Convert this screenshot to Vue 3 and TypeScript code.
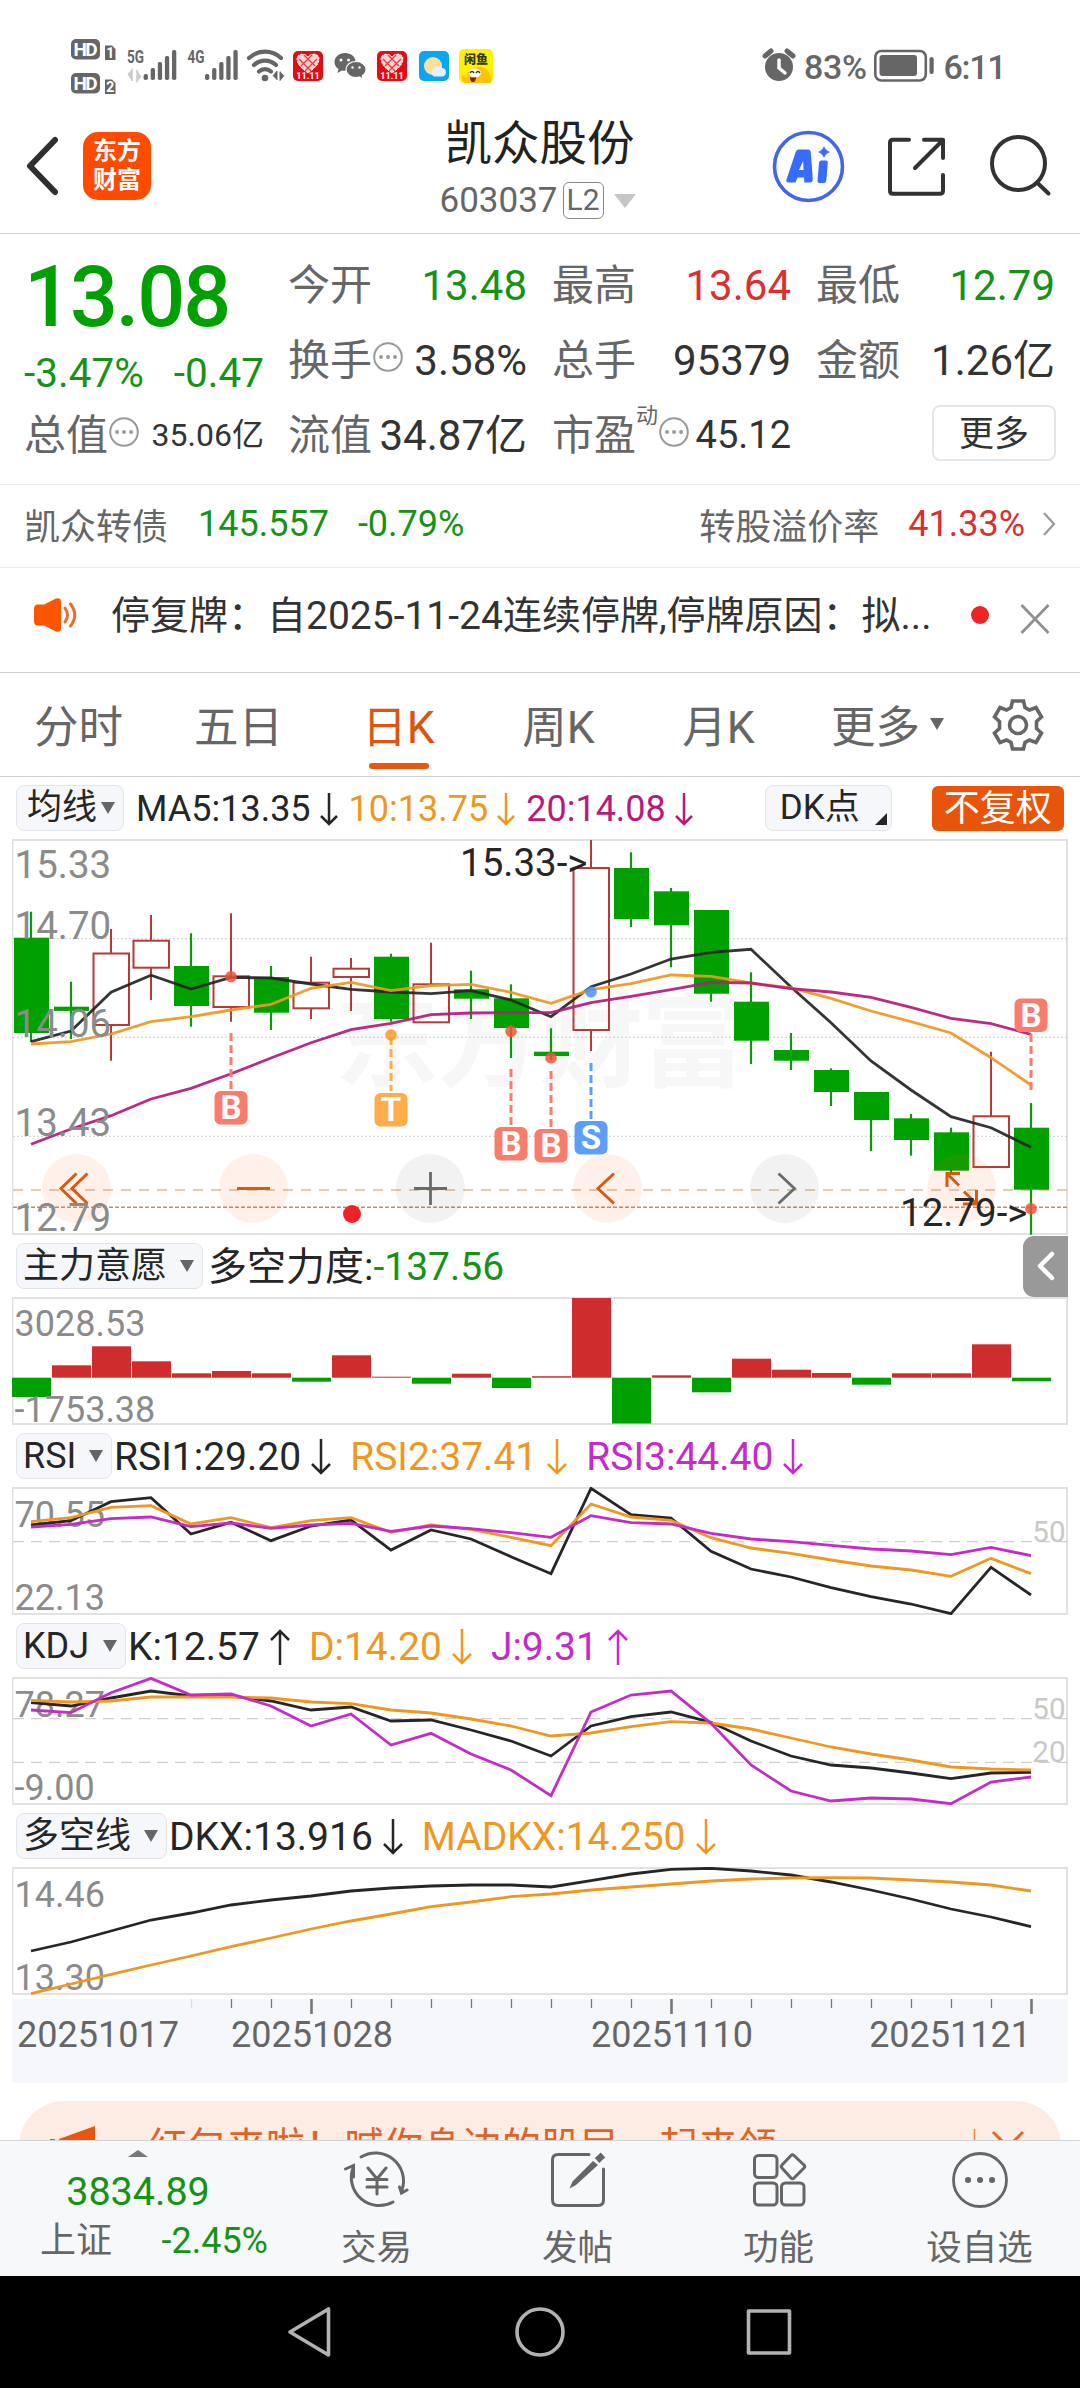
<script setup lang="ts">
type Candle = [up: boolean, top: number, bottom: number, high: number, low: number]
interface Marker { i: number; label: string; box: number; from: number; to: number; dot: number; color: string; dotColor: string }
interface Series { color: string; ys: number[] }
interface Value { text: string; color: string; dir: 'up' | 'down' | '' ; prefix?: string }
interface Panel {
  name: string
  pill: number
  top: number
  values: Value[]
  max: string
  min: string
  maxY: number
  minY: number
  guides: { y: number; label: string }[]
  series: Series[]
  bars?: number[]
}

const INK = '#262626'
const ORANGE = '#ee981f'
const PURPLE = '#c42bc9'
const MAGENTA = '#b81a7b'

const cx = (i: number) => 31 + 40 * i
const line = (ys: number[]) => ys.map((y, i) => `${cx(i)},${y}`).join(' ')

const candles: Candle[] = [
  [false, 937.7, 1033, 911.7, 1042], [false, 1006.7, 1010.9, 981.7, 1039],
  [true, 953.5, 1025, 929, 1060.7], [true, 940.7, 967.7, 915, 1000],
  [false, 966, 1006, 933.3, 1026.7], [true, 976.3, 1007, 913.3, 1021.7],
  [false, 977, 1012.7, 966, 1030], [true, 982.7, 1008.3, 956.7, 1019],
  [true, 968.7, 977, 958, 1011], [false, 956.7, 1019, 953.7, 1021.7],
  [true, 984.3, 1022.3, 942.7, 1022.3], [false, 989.3, 998.7, 970.7, 1019],
  [false, 998.3, 1028, 984.3, 1058], [false, 1051.7, 1056, 1028.3, 1060],
  [true, 868, 1030, 840, 1051], [false, 868, 919, 852.3, 927],
  [false, 891.3, 925.3, 888, 967.3], [false, 910, 993.7, 910, 1001.7],
  [false, 1001.7, 1040.7, 972.3, 1064], [false, 1050, 1060.7, 1033, 1070],
  [false, 1070, 1092, 1068.3, 1106], [false, 1092, 1120, 1092, 1151],
  [false, 1118.3, 1140, 1114, 1155.7], [false, 1132.3, 1170.7, 1127.7, 1173],
  [true, 1116.3, 1167, 1051.7, 1167], [false, 1127.7, 1189.7, 1103, 1234.7],
]
const averages: Series[] = [
  { color: INK, ys: [1041.7, 1031, 992.3, 975.3, 989, 977.3, 978, 984, 989.3, 992, 993.7, 990.7, 1000, 1016.7, 986.7, 974, 959, 952.3, 949.3, 987, 1022.7, 1061, 1090, 1116.7, 1127.7, 1147.3] },
  { color: ORANGE, ys: [1044, 1041.7, 1034, 1021.7, 1016.7, 1010, 1004.3, 988.3, 982.3, 990.7, 985.7, 984.3, 992.3, 1003.3, 989.7, 983.7, 975, 976.3, 983, 988, 998.3, 1011, 1021.7, 1033, 1057.7, 1085] },
  { color: MAGENTA, ys: [1144.3, 1129, 1115.7, 1099, 1088.3, 1073.7, 1058, 1042.7, 1029.7, 1023.3, 1014.7, 1013, 1012.7, 1012.7, 1002.7, 996.3, 989.7, 982.3, 983, 988.7, 992, 997.3, 1007.3, 1018.3, 1023.7, 1034.3] },
]
const RED_TAG = '#fa7c6b'
const markers: Marker[] = [
  { i: 5, label: 'B', box: 1091, from: 1033, to: 1089, dot: 976.7, color: RED_TAG, dotColor: '#f0533c' },
  { i: 9, label: 'T', box: 1093, from: 1037, to: 1091, dot: 1035, color: '#ffad4a', dotColor: '#ff9a26' },
  { i: 12, label: 'B', box: 1127, from: 1069, to: 1125, dot: 1031.3, color: RED_TAG, dotColor: '#f0533c' },
  { i: 13, label: 'B', box: 1129, from: 1071, to: 1127, dot: 1058, color: RED_TAG, dotColor: '#f0533c' },
  { i: 14, label: 'S', box: 1121, from: 1063, to: 1119, dot: 992, color: '#5c9ffb', dotColor: '#4a92fb' },
  { i: 25, label: 'B', box: 998.5, from: 1034, to: 1090, dot: 1208.7, color: RED_TAG, dotColor: '#f0533c' },
]
const priceLabels: [string, number][] = [['15.33', 877.5], ['14.70', 938.7], ['14.06', 1037.3], ['13.43', 1135.7], ['12.79', 1230.7]]
const rings = [
  { x: 76.4, warm: true }, { x: 253.4, warm: true }, { x: 430.4, warm: false },
  { x: 607.5, warm: true }, { x: 784.5, warm: false }, { x: 961.5, warm: true },
]
const maValues: Value[] = [
  { text: 'MA5:13.35', color: INK, dir: 'down' },
  { text: '10:13.75', color: ORANGE, dir: 'down' },
  { text: '20:14.08', color: MAGENTA, dir: 'down' },
]

const ZERO = 1377.7
const scale = (base: number, ps: number[]) => ps.map(p => base + p / 3)
const panels: Panel[] = [
  {
    name: '主力意愿', pill: 187, top: 1297, max: '3028.53', min: '-1753.38', maxY: 1336, minY: 1421.7, guides: [], series: [],
    values: [{ prefix: '多空力度:', text: '-137.56', color: '#169316', dir: '' }],
    bars: [1397, 1365.3, 1346.3, 1361.3, 1373.3, 1371, 1373.3, 1381.7, 1355.3, 1376.7, 1383.7, 1373.7, 1388, 1376.2, 1298, 1423.5, 1375.3, 1392.3, 1358.7, 1369.7, 1373, 1384.7, 1373.3, 1373.3, 1344.3, 1381.3],
  },
  {
    name: 'RSI', pill: 96, top: 1487, max: '70.55', min: '22.13', maxY: 1526.7, minY: 1609.7,
    guides: [{ y: 1541.7, label: '50' }],
    values: [{ text: 'RSI1:29.20', color: INK, dir: 'down' }, { text: 'RSI2:37.41', color: ORANGE, dir: 'down' }, { text: 'RSI3:44.40', color: PURPLE, dir: 'down' }],
    series: [
      { color: INK, ys: scale(1230, [885, 872, 815, 803, 912, 877, 932, 888, 870, 960, 900, 927, 980, 1031, 775, 854, 864, 964, 1017, 1041, 1073, 1100, 1122, 1151, 1012, 1095]) },
      { color: ORANGE, ys: scale(1230, [875, 863, 832, 827, 882, 863, 893, 872, 863, 907, 885, 898, 922, 947, 822, 861, 871, 923, 954, 970, 990, 1008, 1020, 1039, 985, 1031]) },
      { color: PURPLE, ys: scale(1230, [891, 883, 866, 861, 890, 879, 895, 885, 880, 904, 888, 896, 908, 922, 857, 878, 882, 910, 927, 935, 946, 957, 963, 974, 952, 977]) },
    ],
  },
  {
    name: 'KDJ', pill: 110, top: 1677, max: '78.27', min: '-9.00', maxY: 1717, minY: 1800,
    guides: [{ y: 1718.7, label: '50' }, { y: 1762.3, label: '20' }],
    values: [{ text: 'K:12.57', color: INK, dir: 'up' }, { text: 'D:14.20', color: ORANGE, dir: 'down' }, { text: 'J:9.31', color: PURPLE, dir: 'up' }],
    series: [
      { color: INK, ys: scale(1640, [188, 198, 174, 153, 168, 168, 183, 210, 201, 243, 240, 270, 303, 348, 258, 230, 216, 247, 303, 348, 375, 384, 399, 416, 399, 397]) },
      { color: ORANGE, ys: scale(1640, [181, 186, 183, 171, 171, 171, 174, 186, 191, 210, 219, 237, 258, 288, 279, 260, 245, 249, 267, 294, 321, 342, 360, 381, 387, 390]) },
      { color: PURPLE, ys: scale(1640, [210, 218, 158, 115, 165, 162, 198, 258, 222, 315, 280, 342, 390, 467, 216, 165, 153, 250, 375, 453, 483, 474, 477, 491, 426, 411]) },
    ],
  },
  {
    name: '多空线', pill: 151, top: 1867, max: '14.46', min: '13.30', maxY: 1907, minY: 1989.7, guides: [],
    values: [{ text: 'DKX:13.916', color: INK, dir: 'down' }, { text: 'MADKX:14.250', color: ORANGE, dir: 'down' }],
    series: [
      { color: INK, ys: scale(1640, [933, 906, 873, 840, 819, 795, 780, 768, 753, 744, 738, 735, 735, 741, 722, 702, 688, 685, 693, 705, 726, 750, 777, 807, 831, 860]) },
      { color: ORANGE, ys: scale(1640, [1061, 1032, 1003, 975, 948, 920, 894, 867, 843, 822, 800, 786, 770, 762, 750, 741, 732, 723, 717, 714, 713, 714, 720, 726, 735, 753]) },
    ],
  },
]
const ticks = Array.from({ length: 22 }, (_, k) => k + 4)
const isMajor = (i: number) => i === 7 || i === 16 || i === 25

const tabs = ['分时', '五日', '日K', '周K', '月K', '更多']
const signals = [{ x: 127, net: '5G', bars: 143.6 }, { x: 187.5, net: '4G', bars: 205 }]
</script>

<template>
  <div class="screen">
    <div class="status">
      <svg width="1080" height="100" viewBox="0 0 1080 100">
        <g v-for="(y, k) in [39, 73]" :key="y">
          <rect x="71" :y="y" width="29" height="20.5" rx="5" fill="#666" />
          <text x="73.500" :y="y + 16.5" class="hd" textLength="24">HD</text>
          <path :d="`M105 ${y + 6.5}h7l3.500 3.500v11h-10.500z`" fill="#666" />
          <text x="110.200" :y="y + 19" class="sim" text-anchor="middle">{{ k + 1 }}</text>
        </g>
        <g v-for="s in signals" :key="s.net">
          <text :x="s.x" y="63" class="net" textLength="17" lengthAdjust="spacingAndGlyphs">{{ s.net }}</text>
          <rect v-for="b in 5" :key="b" :x="s.bars + (b - 1) * 7.100" :y="80 - b * 6" width="4.300" :height="b * 6" rx="1.800" fill="#666" />
        </g>
        <path d="M128 75l4-5v11M137 70v11l4-5" fill="#ccc" stroke="#ccc" stroke-width="1.500" />
        <g fill="none" stroke="#666" stroke-width="4.200" stroke-linecap="round">
          <path d="M249 58a23.500 23.500 0 0 1 32 0M254 65a16 16 0 0 1 22 0M259 71.500a9 9 0 0 1 12 0" />
        </g>
        <circle cx="265" cy="78" r="3.300" fill="#666" />
        <path d="M273 76l4-5v9M280 71.500v9l4-5" fill="#666" stroke="#666" />
        <g v-for="x in [293, 377]" :key="x">
          <rect :x="x" y="51" width="30" height="30" rx="5" fill="#df0d16" />
          <path :transform="`translate(${x + 15} 63)`" d="M0 10C-7 5-11 1-11-4-11-9-4-11 0-6 4-11 11-9 11-4 11 1 7 5 0 10z" fill="#fbd3d1" stroke="#fff" stroke-dasharray="2 1.500" />
          <path :transform="`translate(${x + 15} 63)`" d="M-9-4L3 8M-4-8L7 3M9-4L-3 8M4-8L-7 3" stroke="#e53a40" stroke-width="1.300" />
          <text :x="x + 15" y="79" class="sale" text-anchor="middle">11.11</text>
        </g>
        <g fill="#666">
          <path d="M345 53c-6 0-10.500 4-10.500 9 0 3 1.500 5.500 4 7l-1 4 4.500-2.500c1 .3 2 .3 3 .3 6 0 10.500-4 10.500-9s-4.500-8.800-10.500-8.800z" />
          <path d="M356 61.500c-5.500 0-10 3.500-10 8s4.500 8 10 8c1.200 0 2.300-.2 3.300-.5l4 2.200-1-3.500c2.300-1.500 3.700-3.700 3.700-6.200 0-4.500-4.500-8-10-8z" stroke="#fff" stroke-width="1.200" />
        </g>
        <g fill="#fff"><circle cx="341" cy="60" r="1.500" /><circle cx="348.500" cy="60" r="1.500" /><circle cx="352.500" cy="67.500" r="1.200" /><circle cx="359.500" cy="67.500" r="1.200" /></g>
        <rect x="419" y="51" width="30" height="30" rx="5" fill="#0aa6f2" />
        <circle cx="433" cy="66" r="9" fill="#ffdf9c" />
        <path d="M434 76.500a4 4 0 0 1 0-7.500 5 5 0 0 1 8.500-1 4.300 4.300 0 0 1-.5 8.500z" fill="#e8effc" />
        <rect x="459" y="49" width="34" height="34" rx="5" fill="#fff200" />
        <text x="476" y="64" class="fish" text-anchor="middle">闲鱼</text>
        <path d="M465 83c-4-3-4-6-2-8l3 2c2-8 9-11 16-10 7 2 10 8 9 16z" fill="#ffc400" />
        <ellipse cx="475" cy="73" rx="6" ry="4.500" fill="#fff" />
        <path d="M470 73q2-3 4 0M476 73q2-3 4 0" stroke="#333" stroke-width="1.400" fill="none" />
        <path d="M470 77q3 1 6 0 0 5-3 5t-3-5z" fill="#7a2010" />
        <circle cx="779" cy="67" r="14" fill="#666" />
        <path d="M765 56l6-5M793 56l-6-5" stroke="#666" stroke-width="5" stroke-linecap="round" />
        <path d="M779 60v8l6 5" fill="none" stroke="#fff" stroke-width="3.500" stroke-linecap="round" />
        <text x="804" y="78.500" class="stat" textLength="63">83%</text>
        <rect x="875.300" y="51" width="50.500" height="29.500" rx="6" fill="none" stroke="#666" stroke-width="2.600" />
        <rect x="879.500" y="55" width="37.500" height="21" rx="3" fill="#666" />
        <rect x="929.500" y="57" width="4.200" height="17" rx="2" fill="#666" />
        <text x="943.500" y="78.500" class="stat" textLength="63">6:11</text>
      </svg>
    </div>

    <header class="header">
      <svg class="back" width="34" height="60" viewBox="0 0 34 60"><path d="M29 4L4 30 29 56" fill="none" stroke="#2f2f2f" stroke-width="6" stroke-linecap="round" stroke-linejoin="round" /></svg>
      <div class="logo"><span>东方</span><span>财富</span></div>
      <div class="title">
        <h1>凯众股份</h1>
        <div class="code"><span>603037</span><i>L2</i><b class="drop"></b></div>
      </div>
      <svg class="actions" width="286" height="80" viewBox="770 126 286 80">
        <circle cx="808.500" cy="166.500" r="34" fill="#fff" stroke="#4166e8" stroke-width="3.600" />
        <path fill-rule="evenodd" d="M798.500 149.500h9.500q2.500 0 2.800 3l2 27q0 3-3 3h-5.500l-.3-5h-6.500l-2 5h-7q-3 0-2-3l9-27q1-3 3-3zM799 170h4.500l-.3-9z" fill="#366cff" />
        <path d="M821 160.500h5q2 0 1.800 2l-1.500 18q-.3 2.500-2.500 2.500h-4.500q-2 0-1.800-2.500l1.500-17.500q.3-2.500 2-2.500zM824 146q1.500 4.500 6 6-4.500 1.500-6 6-1.500-4.500-6-6 4.500-1.500 6-6z" fill="#366cff" />
        <g fill="none" stroke="#333" stroke-width="4" stroke-linecap="round" stroke-linejoin="round">
          <path d="M909 139.700h-16q-3 0-3 3v48q0 3 3 3h47q3 0 3-3V175M924 139.700h19V158M942 141L915 168" />
          <circle cx="1018.500" cy="163.500" r="26.500" />
          <path d="M1037.500 183L1048.500 193.500" />
        </g>
      </svg>
    </header>

    <section class="stats">
      <div class="lead">
        <div class="price">13.08</div>
        <div class="change"><span>-3.47%</span><span>-0.47</span></div>
        <div class="cell"><label>总值</label><svg class="info" viewBox="0 0 30 30"><circle cx="15" cy="15" r="13.800" /><path d="M8 15h.1M15 15h.1M22 15h.1" /></svg><em class="small">35.06亿</em></div>
      </div>
      <div class="grid">
        <div class="cell"><label>今开</label><em class="down">13.48</em></div>
        <div class="cell"><label>最高</label><em class="up">13.64</em></div>
        <div class="cell"><label>最低</label><em class="down">12.79</em></div>
        <div class="cell"><label>换手</label><svg class="info" viewBox="0 0 30 30"><circle cx="15" cy="15" r="13.800" /><path d="M8 15h.1M15 15h.1M22 15h.1" /></svg><em>3.58%</em></div>
        <div class="cell"><label>总手</label><em>95379</em></div>
        <div class="cell"><label>金额</label><em>1.26亿</em></div>
        <div class="cell"><label>流值</label><em>34.87亿</em></div>
        <div class="cell"><label>市盈</label><sup>动</sup><svg class="info" viewBox="0 0 30 30"><circle cx="15" cy="15" r="13.800" /><path d="M8 15h.1M15 15h.1M22 15h.1" /></svg><em class="mid">45.12</em></div>
        <div class="cell end"><button class="more">更多</button></div>
      </div>
    </section>

    <section class="bond">
      <span class="name">凯众转债</span><span class="down v1">145.557</span><span class="down v2">-0.79%</span>
      <span class="name rate">转股溢价率</span><span class="up v3">41.33%</span>
      <svg width="14" height="26" viewBox="0 0 14 26"><path d="M2 2l10 11L2 24" fill="none" stroke="#999" stroke-width="2.200" /></svg>
    </section>

    <section class="notice">
      <svg width="46" height="38" viewBox="33 596 46 38">
        <path d="M38 604.500Q34 604.500 34 609V621Q34 625.500 38 625.500H44L56 631.500Q61 633 61 628V602Q61 597 56 598.500L44 604.500Z" fill="#ff5500" />
        <path d="M65 608Q70 615 65 622M70.500 604Q79 615 70.500 626" fill="none" stroke="#f06a28" stroke-width="3" stroke-linecap="round" />
      </svg>
      <p>停复牌：自2025-11-24连续停牌,停牌原因：拟...</p>
      <i class="dot"></i>
      <svg class="close" width="30" height="32" viewBox="0 0 30 32"><path d="M1.500 2l27 28M28.500 2l-27 28" stroke="#909090" stroke-width="2.800" /></svg>
    </section>

    <nav class="tabs">
      <div v-for="t in tabs" :key="t" class="tab" :class="{ on: t === '日K', wide: t === '更多' }">{{ t }}<b v-if="t === '更多'" class="tri"></b></div>
      <svg class="gear" width="54" height="54" viewBox="-27 -27 54 54" fill="none" stroke="#666" stroke-width="3.600">
        <path d="M-5.500-24H5.500L7-17.500 11.500-15 18-17.500 23.500-8 18.500-3.500V3.500L23.500 8 18 17.500 11.500 15 7 17.500 5.500 24H-5.500L-7 17.500-11.500 15-18 17.500-23.500 8-18.500 3.500V-3.500L-23.500-8-18-17.500-11.500-15-7-17.500z" />
        <circle r="8.500" />
      </svg>
    </nav>

    <div class="legend main">
      <span class="pill ma">均线<b class="tri"></b></span>
      <span v-for="v in maValues" :key="v.text" class="value" :style="{ color: v.color }">{{ v.text }}<svg width="18" height="33" viewBox="0 0 18 33"><path d="M9 0v31M1 23l8 8 8-8" /></svg></span>
      <span class="pill dk">DK点<b class="corner"></b></span>
      <span class="adjust">不复权</span>
    </div>

    <svg class="chart" width="1057" height="396" viewBox="12 839 1057 396">
      <text class="mark" x="335" y="1079" textLength="410">东方财富</text>
      <rect x="12.500" y="840" width="1054.500" height="394" class="frame" />
      <path d="M13 938.700H1067M13 1037.300H1067M13 1136.300H1067" stroke="#ccc" stroke-width="1" stroke-dasharray="2 2" />
      <path d="M13 1190H1067" stroke="#dbbd94" stroke-width="1.600" stroke-dasharray="10 8" />
      <path d="M13 1207.300H1067" stroke="#cd8a58" stroke-width="1.400" stroke-dasharray="4 2" />
      <g v-for="(c, i) in candles" :key="i">
        <template v-if="c[0]">
          <path :d="`M${cx(i)} ${c[3]}V${c[1]}M${cx(i)} ${c[2]}V${c[4]}`" stroke="#b83a38" stroke-width="2" />
          <rect :x="cx(i) - 17.500" :y="c[1]" width="35.500" :height="c[2] - c[1]" fill="none" stroke="#b83a38" stroke-width="2" />
        </template>
        <template v-else>
          <path :d="`M${cx(i)} ${c[3]}V${c[4]}`" stroke="#0a9a0a" stroke-width="2.200" />
          <rect :x="cx(i) - 17" :y="c[1]" width="35" :height="c[2] - c[1]" fill="#00a000" />
        </template>
      </g>
      <polyline v-for="s in averages" :key="s.color" :points="line(s.ys)" fill="none" :stroke="s.color" stroke-width="2.800" stroke-opacity="0.93" />
      <g v-for="m in markers" :key="m.i">
        <path :d="`M${cx(m.i)} ${m.from}V${m.to}`" :stroke="m.color" stroke-width="3" stroke-dasharray="8 4" />
        <circle :cx="cx(m.i)" :cy="m.dot" r="5.800" :fill="m.dotColor" fill-opacity="0.85" />
        <rect :x="cx(m.i) - 16.500" :y="m.box" width="33" height="33.500" rx="6" :fill="m.color" />
        <text :x="cx(m.i)" :y="m.box + 28" class="tag" text-anchor="middle">{{ m.label }}</text>
      </g>
      <circle v-for="r in rings" :key="r.x" :cx="r.x" cy="1188.500" r="34.500" :fill="r.warm ? 'rgba(250,96,20,.09)' : 'rgba(60,60,60,.065)'" />
      <g fill="none" stroke="#d65a14" stroke-width="3">
        <path d="M76.500 1173.500L61 1188.500l15.500 15M87.500 1173.500L72 1188.500l15.500 15M237 1188.500h33M614 1173.500L598 1188.500l16 15" />
        <path d="M947 1187V1173.500h13M947 1173.500l12 12M963 1204h13.500V1190M964 1191.500l12.500 12.500" />
      </g>
      <path d="M414 1188.500h33M430.500 1172v33M778.500 1173.500l16 15-16 15" fill="none" stroke="#6a6a6a" stroke-width="2.800" />
      <ellipse cx="352" cy="1214" rx="9" ry="9" fill="#ef2323" />
      <text v-for="p in priceLabels" :key="p[0]" x="14.500" :y="p[1]" class="axis big">{{ p[0] }}</text>
      <text x="460" y="875.700" class="peak">15.33-&gt;</text>
      <text x="900" y="1225.700" class="peak">12.79-&gt;</text>
    </svg>

    <div v-for="p in panels" :key="p.name" class="panel">
      <div class="legend">
        <span class="pill" :style="{ width: p.pill + 'px' }">{{ p.name }}<b class="tri"></b></span>
        <span v-for="v in p.values" :key="v.text" class="value" :style="{ color: v.color }"><span v-if="v.prefix" class="prefix">{{ v.prefix }}</span>{{ v.text }}<svg v-if="v.dir" width="20" height="36" viewBox="0 0 20 36"><path v-if="v.dir === 'down'" d="M10 0v34M1 25l9 9 9-9" /><path v-else d="M10 36V2M1 11l9-9 9 9" /></svg></span>
        <span v-if="p.bars" class="fold"><svg width="18" height="30" viewBox="0 0 18 30"><path d="M15 3L3 15l12 12" fill="none" stroke="#fff" stroke-width="4.500" stroke-linecap="round" stroke-linejoin="round" /></svg></span>
      </div>
      <svg class="chart" width="1057" height="128" :viewBox="`12 ${p.top} 1057 128`">
        <rect x="12.500" :y="p.top + 1" width="1054.500" height="126" class="frame" />
        <g v-for="g in p.guides" :key="g.y">
          <path :d="`M13 ${g.y}H1067`" stroke="#cfcfcf" stroke-width="1.300" stroke-dasharray="11 7" />
          <text x="1065.500" :y="g.y" class="guide" text-anchor="end">{{ g.label }}</text>
        </g>
        <template v-if="p.bars">
          <rect v-for="(b, i) in p.bars" :key="i" :x="12 + 40 * i" :y="Math.min(b, ZERO)" width="39" :height="Math.abs(b - ZERO)" :fill="b < ZERO ? '#cf2d2d' : '#00a000'" />
        </template>
        <text x="14.500" :y="p.maxY" class="axis">{{ p.max }}</text>
        <text x="14.500" :y="p.minY" class="axis">{{ p.min }}</text>
        <polyline v-for="s in p.series" :key="s.color" :points="line(s.ys)" fill="none" :stroke="s.color" stroke-width="2.800" />
      </svg>
    </div>

    <svg class="chart dates" width="1056" height="84" viewBox="12 1999 1056 84">
      <rect x="12" y="1999" width="1056" height="84" fill="#f6f7fa" />
      <path v-for="i in ticks" :key="i" :d="`M${cx(i) + .5} 1999V${isMajor(i) ? 2014 : 2008}`" :stroke="i === 4 ? '#ddd' : '#777'" :stroke-width="isMajor(i) ? 2.6 : 1.3" />
      <text x="17" y="2046.700">20251017</text>
      <text x="312" y="2046.700" text-anchor="middle">20251028</text>
      <text x="672" y="2046.700" text-anchor="middle">20251110</text>
      <text x="1031" y="2046.700" text-anchor="end">20251121</text>
    </svg>

    <div class="promo-clip">
      <div class="promo">
        <svg width="50" height="40" viewBox="46 2126 50 40"><path d="M57 2139l36-13v40H57zM48 2139h5v20h-5z" fill="#e8560f" /></svg>
        <span>红包来啦！喊你身边的股民一起来领&gt;&gt;</span>
        <svg class="dismiss" width="54" height="34" viewBox="972 2127 54 34"><path d="M974.500 2127v34" stroke="#e8833f" stroke-width="1.500" /><path d="M993 2130l30 30M1023 2130l-30 30" stroke="#dd6a2c" stroke-width="3" /></svg>
      </div>
    </div>

    <footer class="bar">
      <div class="index">
        <b class="rise"></b>
        <div class="level">3834.89</div>
        <div class="row"><span>上证</span><em>-2.45%</em></div>
      </div>
      <div class="item">
        <svg width="66" height="60" viewBox="343 2150 66 60" fill="none" stroke="#666" stroke-width="3" stroke-linecap="round">
          <path d="M360 2157a28 28 0 0 1 41 33M392 2202a28 28 0 0 1-40-34" />
          <path d="M344.500 2169l8-3.500V2177M406 2190l-5.500 3-2-6M367 2168l9 11 9-11M376 2179v15M366 2179.500h20M366 2187h20" />
        </svg><span>交易</span>
      </div>
      <div class="item">
        <svg width="60" height="60" viewBox="547 2150 60 60" fill="none" stroke="#666" stroke-width="3">
          <path d="M588 2154.500h-31q-5.500 0-5.500 5.500v40q0 5.500 5.500 5.500h40q5.500 0 5.500-5.500v-31" stroke-linecap="round" />
          <path d="M592 2161l5 4-22 20-6.500 3.500 3-7z" fill="#666" stroke="none" /><path d="M596 2160.500l6-5.500" stroke-width="6.500" />
        </svg><span>发帖</span>
      </div>
      <div class="item">
        <svg width="60" height="60" viewBox="748 2150 60 60" fill="none" stroke="#666" stroke-width="3" stroke-linejoin="round">
          <rect x="753.500" y="2155.500" width="22.500" height="22" rx="4" /><rect x="753.500" y="2183" width="22.500" height="22" rx="4" /><rect x="780.500" y="2183" width="22.500" height="22" rx="4" />
          <path d="M790 2155.500q1.500-1.500 3 0l10 9.500q1.500 1.500 0 3l-10 10q-1.500 1.500-3 0l-9-10q-1.500-1.500 0-3z" />
        </svg><span>功能</span>
      </div>
      <div class="item">
        <svg width="60" height="60" viewBox="-30 -30 60 60"><circle r="26.500" fill="none" stroke="#666" stroke-width="2.800" /><path d="M-12 0h.1M0 0h.1M12 0h.1" stroke="#666" stroke-width="6" stroke-linecap="round" /></svg><span>设自选</span>
      </div>
    </footer>

    <div class="system">
      <svg width="1080" height="112" viewBox="0 2276 1080 112" fill="none" stroke="#b2b2b2" stroke-width="3.600" stroke-linejoin="round">
        <path d="M328.500 2309v46L290 2332z" /><circle cx="540" cy="2332" r="23" /><rect x="748.500" y="2311" width="41" height="42" />
      </svg>
    </div>
  </div>
</template>

<style>
body { margin: 0; background: #fff; }
</style>

<style scoped>
.screen { width: 1080px; height: 2388px; overflow: hidden; background: #fff; color: #333; font-family: Roboto, "Noto Sans CJK SC", sans-serif; font-size: 36px; display: flex; flex-direction: column; }
.screen > * { flex: none; }
.screen * { box-sizing: border-box; }
svg { display: block; flex: none; }
em, i { font-style: normal; }
.up { color: #d93030 !important; }
.down { color: #169316 !important; }

.status { height: 86px; }
.hd { font-size: 19px; font-weight: 700; fill: #fff; }
.sim { font-size: 14px; font-weight: 700; fill: #fff; }
.net { font-size: 19px; font-weight: 700; fill: #666; }
.sale { font-size: 9px; font-weight: 700; fill: #fff; }
.fish { font-size: 12px; font-weight: 900; fill: #333; }
.stat { font-size: 34px; font-weight: 500; fill: #666; }

.header { height: 148px; border-bottom: 1.5px solid #d2d2d2; display: flex; align-items: flex-start; padding: 46px 24px 0 26px; position: relative; }
.back { margin-top: 4px; }
.logo { width: 68px; height: 68px; margin-left: 23px; border-radius: 15px; background: #ff4a00; color: #fff; font-weight: 700; font-size: 24px; line-height: 29px; display: flex; flex-direction: column; align-items: center; justify-content: center; }
.title { position: absolute; left: 0; right: 0; top: 26px; display: flex; flex-direction: column; align-items: center; pointer-events: none; }
h1 { margin: 0 0 0 -1px; font-size: 47.5px; font-weight: 400; line-height: 64px; color: #222; }
.code { display: flex; align-items: center; height: 49px; font-size: 35px; color: #666; margin-left: -5px; }
.code i { width: 41px; height: 37px; border: 1.5px solid #888; border-radius: 6px; font-size: 30px; line-height: 34px; text-align: center; margin-left: 5px; }
.drop { border: 11px solid transparent; border-top: 14px solid #c6c6c6; border-bottom: 0; margin-left: 10px; }
.actions { margin-left: auto; margin-top: -6px; }

.stats { height: 251px; padding: 14px 24px 0; border-bottom: 1.5px solid #ebebeb; display: flex; gap: 24px; }
.lead { width: 240px; }
.price { font-size: 84.5px; font-weight: 500; line-height: 100px; letter-spacing: -2.1px; color: #00a000; white-space: nowrap; }
.change { display: flex; justify-content: space-between; font-size: 40.5px; line-height: 50px; color: #169316; }
.grid { flex: 1; display: grid; grid-template-columns: repeat(3, 240px); column-gap: 24px; grid-auto-rows: 75px; align-content: start; }
.cell { display: flex; align-items: center; height: 75px; font-size: 42px; line-height: 75px; white-space: nowrap; }
.cell label { color: #666; }
.cell em { margin-left: auto; }
.grid .cell em { margin-right: 1px; }
.cell .small { font-size: 32px; }
.cell .mid { font-size: 38px; }
.cell sup { font-size: 22px; line-height: 24px; color: #666; align-self: flex-start; margin-top: 6px; }
.info { width: 30px; height: 30px; margin: -8px 0 0 1px; fill: none; stroke: #999; stroke-width: 2; }
.info path { stroke-width: 3.800; stroke-linecap: round; }
.end { justify-content: flex-end; }
.more { width: 124px; height: 56px; margin-top: -6px; border: 2px solid #e5e6ec; border-radius: 8px; background: #fff; font: 35px/52px Roboto, "Noto Sans CJK SC", sans-serif; color: #333; padding: 2px 0 0; }

.bond { height: 83px; border-bottom: 1.5px solid #ebebeb; display: flex; align-items: center; padding: 0 24px 4px; }
.name { color: #666; }
.v1 { margin-left: 30px; }
.v2 { margin-left: 29px; }
.rate { margin-left: auto; }
.v3 { margin-left: 29px; margin-right: 17px; }

.notice { height: 105px; border-bottom: 1.5px solid #d2d2d2; display: flex; align-items: center; padding: 0 30px 10px 33px; }
.notice p { margin: -6px 0 0 32px; font-size: 39px; white-space: nowrap; }
.dot { width: 18px; height: 18px; border-radius: 50%; background: #ef2323; margin-left: auto; }
.close { margin: 7px 0 0 31px; }

.tabs { height: 104px; border-bottom: 1.5px solid #d2d2d2; display: flex; align-items: center; position: relative; }
.tab { width: 160px; height: 102px; display: flex; align-items: center; justify-content: center; font-size: 44.5px; color: #666; padding: 0 3px 2px 0; position: relative; white-space: nowrap; }
.tab.wide { width: 178px; }
.tab.on { color: #d8560f; }
.tab.on::after { content: ""; position: absolute; left: 50%; bottom: 7px; width: 60px; height: 6px; margin-left: -31px; border-radius: 3px; background: #e8560f; }
.tri { border: 7px solid transparent; border-top: 12px solid #666; border-bottom: 0; }
.tab .tri { margin-left: 10px; }
.gear { margin-left: 13px; }

.legend { height: 62px; display: flex; align-items: center; padding-left: 16px; white-space: nowrap; position: relative; }
.pill { height: 46px; background: #f6f7fa; border: 1.5px solid #e3e4e8; border-radius: 8px; display: flex; align-items: center; justify-content: space-between; padding: 0 8px 0 6px; color: #262626; font-size: 36px; line-height: 44px; }
.pill.ma { width: 108px; font-size: 35px; padding: 0 8px 0 10px; margin-right: 11px; }
.value { display: flex; align-items: center; font-size: 39px; line-height: 62px; margin-left: 2px; padding-top: 1px; }
.value + .value { margin-left: 19px; }
.value svg { margin-left: 10px; fill: none; stroke: currentColor; stroke-width: 2.500; }
.prefix { color: #262626; margin-left: 3px; }
.main .value { font-size: 36px; margin-left: 1px; padding-top: 2px; }
.main .value + .value { margin-left: 11px; }
.main .value svg { margin-left: 9px; }
.pill.dk { width: 127px; margin-left: 72px; padding: 0 4px 0 14px; font-size: 35px; }
.corner { align-self: flex-end; margin-bottom: 5px; border-left: 12px solid transparent; border-bottom: 12px solid #262626; }
.adjust { margin-left: 40px; width: 132px; height: 45px; line-height: 46px; background: #e8540a; color: #fff; border-radius: 6px; text-align: center; font-size: 36px; }
.fold { margin-left: auto; margin-right: 12px; width: 45px; height: 61px; background: #999; border-radius: 11px 0 0 11px; display: flex; align-items: center; justify-content: center; }

.chart { margin-left: 12px; }
.frame { fill: none; stroke: #e2e2e2; stroke-width: 2; }
.mark { font-size: 104px; font-weight: 700; fill: #f7f7f7; }
.tag { font-size: 33px; font-weight: 700; fill: #fff; }
.axis { font-size: 36px; fill: #8b8b8b; }
.axis.big { font-size: 38.500px; }
.peak { font-size: 38.500px; fill: #262626; }
.guide { font-size: 29.500px; fill: #c9c9c9; }
.dates { margin-top: 4px; font-size: 36px; fill: #666; }

.promo-clip { height: 57px; padding: 18px 19px 0; overflow: hidden; }
.promo { height: 90px; background: #fdece3; border-radius: 45px; padding: 0 35px 0 29px; display: flex; align-items: center; color: #dc6426; font-size: 39.300px; white-space: nowrap; }
.promo span { margin: -5px 0 0 50px; }
.dismiss { margin-left: auto; }

.bar { height: 136px; background: #f7f8fa; border-top: 1.5px solid #d0d3d8; display: flex; }
.index { width: 276px; padding-top: 9px; display: flex; flex-direction: column; align-items: center; }
.rise { border: 10px solid transparent; border-bottom: 7px solid #777; border-top: 0; }
.level { font-size: 39.500px; line-height: 44px; margin-top: 13px; color: #169316; }
.row { align-self: stretch; display: flex; justify-content: space-between; padding: 0 8px 0 40px; margin-top: 5px; font-size: 36px; line-height: 44px; color: #666; }
.row em { color: #169316; }
.item { width: 201px; display: flex; flex-direction: column; align-items: center; padding-top: 9px; font-size: 35.500px; color: #666; }
.item span { line-height: 44px; margin-top: 16px; }
.system { height: 112px; background: #000; }
</style>
